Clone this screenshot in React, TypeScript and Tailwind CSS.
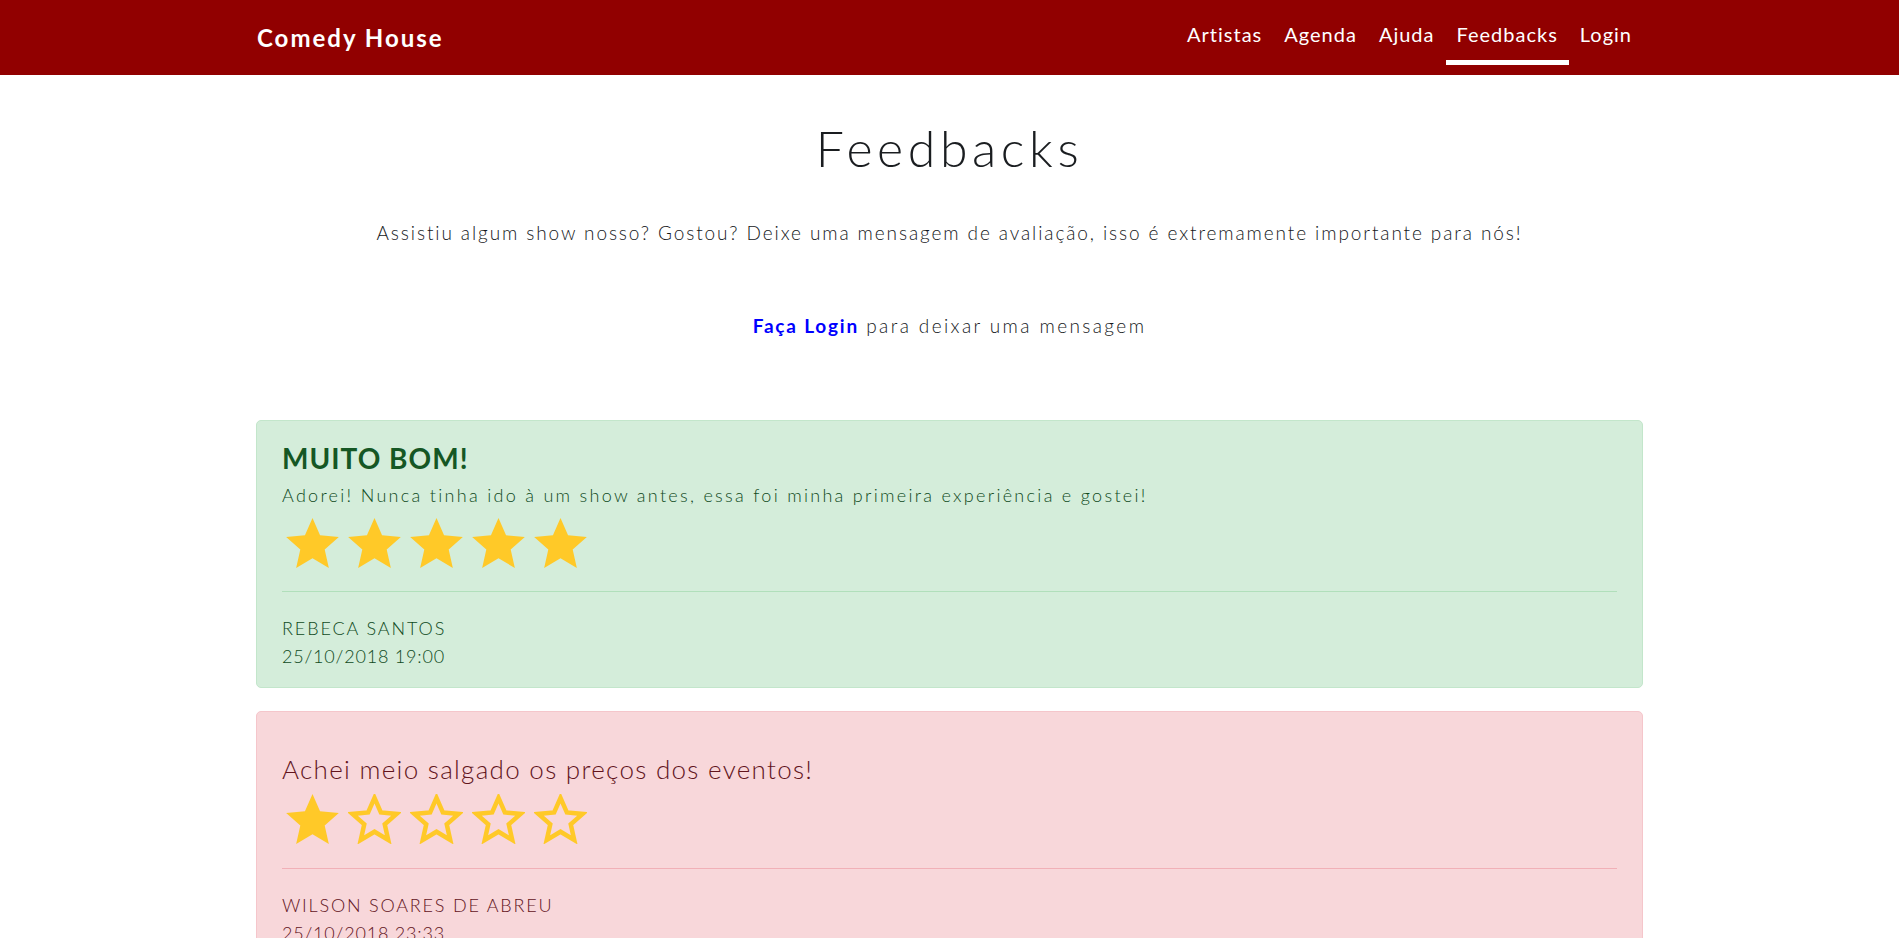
import React from "react";

const FONT = { fontFamily: "Lato, 'Noto Sans', sans-serif" };

function Star({ filled }: { filled: boolean }) {
  return (
    <svg width="53" height="50" viewBox="0 0 21.6 20.5" className="block shrink-0">
      {filled ? (
        <polygon
          transform="translate(-1.2 -1.5)"
          points="12,1.5 15.1,8.6 22.8,9.3 17,14.4 18.7,22 12,18 5.3,22 7,14.4 1.2,9.3 8.9,8.6"
          fill="#ffc928"
        />
      ) : (
        <polygon
          transform="translate(10.8 10.6) scale(0.84) translate(-12 -12.2)"
          points="12,1.5 15.1,8.6 22.8,9.3 17,14.4 18.7,22 12,18 5.3,22 7,14.4 1.2,9.3 8.9,8.6"
          fill="none"
          stroke="#ffc928"
          strokeWidth="2.2"
          strokeLinejoin="miter"
        />
      )}
    </svg>
  );
}

function Stars({ n }: { n: number }) {
  return (
    <div className="ml-[4px] flex gap-[9px]">
      {[0, 1, 2, 3, 4].map((i) => (
        <Star key={i} filled={i < n} />
      ))}
    </div>
  );
}

const links = ["Artistas", "Agenda", "Ajuda", "Feedbacks", "Login"];

export default function App() {
  return (
    <div className="min-h-screen bg-white text-[#212529]" style={FONT}>
      <nav className="h-[75px] bg-[#910000]">
        <div className="mx-auto flex h-full w-[1387px] items-center justify-between">
          <a className="pl-px text-[24px] font-bold tracking-[2px] text-white">Comedy House</a>
          <ul className="flex h-full">
            {links.map((l) => (
              <li key={l} className="relative flex h-full items-center">
                <a className="px-[11px] pb-[7px] text-[20px] tracking-[1px] text-white">{l}</a>
                {l === "Feedbacks" && (
                  <span className="absolute left-0 right-0 top-[60px] h-[5px] bg-white" />
                )}
              </li>
            ))}
          </ul>
        </div>
      </nav>

      <main className="mx-auto w-[1387px]">
        <h1 className="mt-[43px] text-center text-[50px] font-light leading-[60px] tracking-[4.6px] text-[#1a1d20]">
          Feedbacks
        </h1>
        <p className="mt-[41px] text-center text-[19px] font-light leading-[27px] tracking-[1.9px] text-[#15181b]">
          Assistiu algum show nosso? Gostou? Deixe uma mensagem de avaliação, isso é extremamente importante para nós!
        </p>
        <p className="mt-[66px] text-center text-[19px] leading-[27px] tracking-[2.4px] text-[#15181b]">
          <a className="font-bold tracking-[1.8px] text-[#0000ff]">Faça Login</a>{" "}
          <span className="font-light">para deixar uma mensagem</span>
        </p>

        <div className="mt-[81px] rounded-[5px] border border-[#c3e6cb] bg-[#d4edda] px-[25px] pb-[17px] pt-[20px] text-[#155724]">
          <h3 className="text-[28px] font-bold leading-[34px] tracking-[1px]">MUITO BOM!</h3>
          <p className="mt-[7px] text-[18px] font-light leading-[27px] tracking-[2.3px] text-[#0f4a1c]">
            Adorei! Nunca tinha ido à um show antes, essa foi minha primeira experiência e gostei!
          </p>
          <div className="mt-[9px]">
            <Stars n={5} />
          </div>
          <hr className="mt-[23px] border-t border-[#b1dfbb]" />
          <div className="mt-[22px] text-[18px] font-light leading-[28px] text-[#0f4a1c]">
            <div className="tracking-[1.9px]">REBECA SANTOS</div>
            <div className="tracking-[0.8px]">25/10/2018 19:00</div>
          </div>
        </div>

        <div className="mt-[23px] rounded-[5px] border border-[#f5c6cb] bg-[#f8d7da] px-[25px] pb-[17px] pt-[20px] text-[#62141c]">
          <p className="mt-[20px] text-[26px] font-light leading-[34px] tracking-[1.3px]">
            Achei meio salgado os preços dos eventos!
          </p>
          <div className="mt-[8px]">
            <Stars n={1} />
          </div>
          <hr className="mt-[24px] border-t border-[#f1b0b7]" />
          <div className="mt-[22px] text-[18px] font-light leading-[28px]">
            <div className="tracking-[1.8px]">WILSON SOARES DE ABREU</div>
            <div className="tracking-[0.8px]">25/10/2018 23:33</div>
          </div>
        </div>
        <div className="h-[40px]" />
      </main>
    </div>
  );
}
